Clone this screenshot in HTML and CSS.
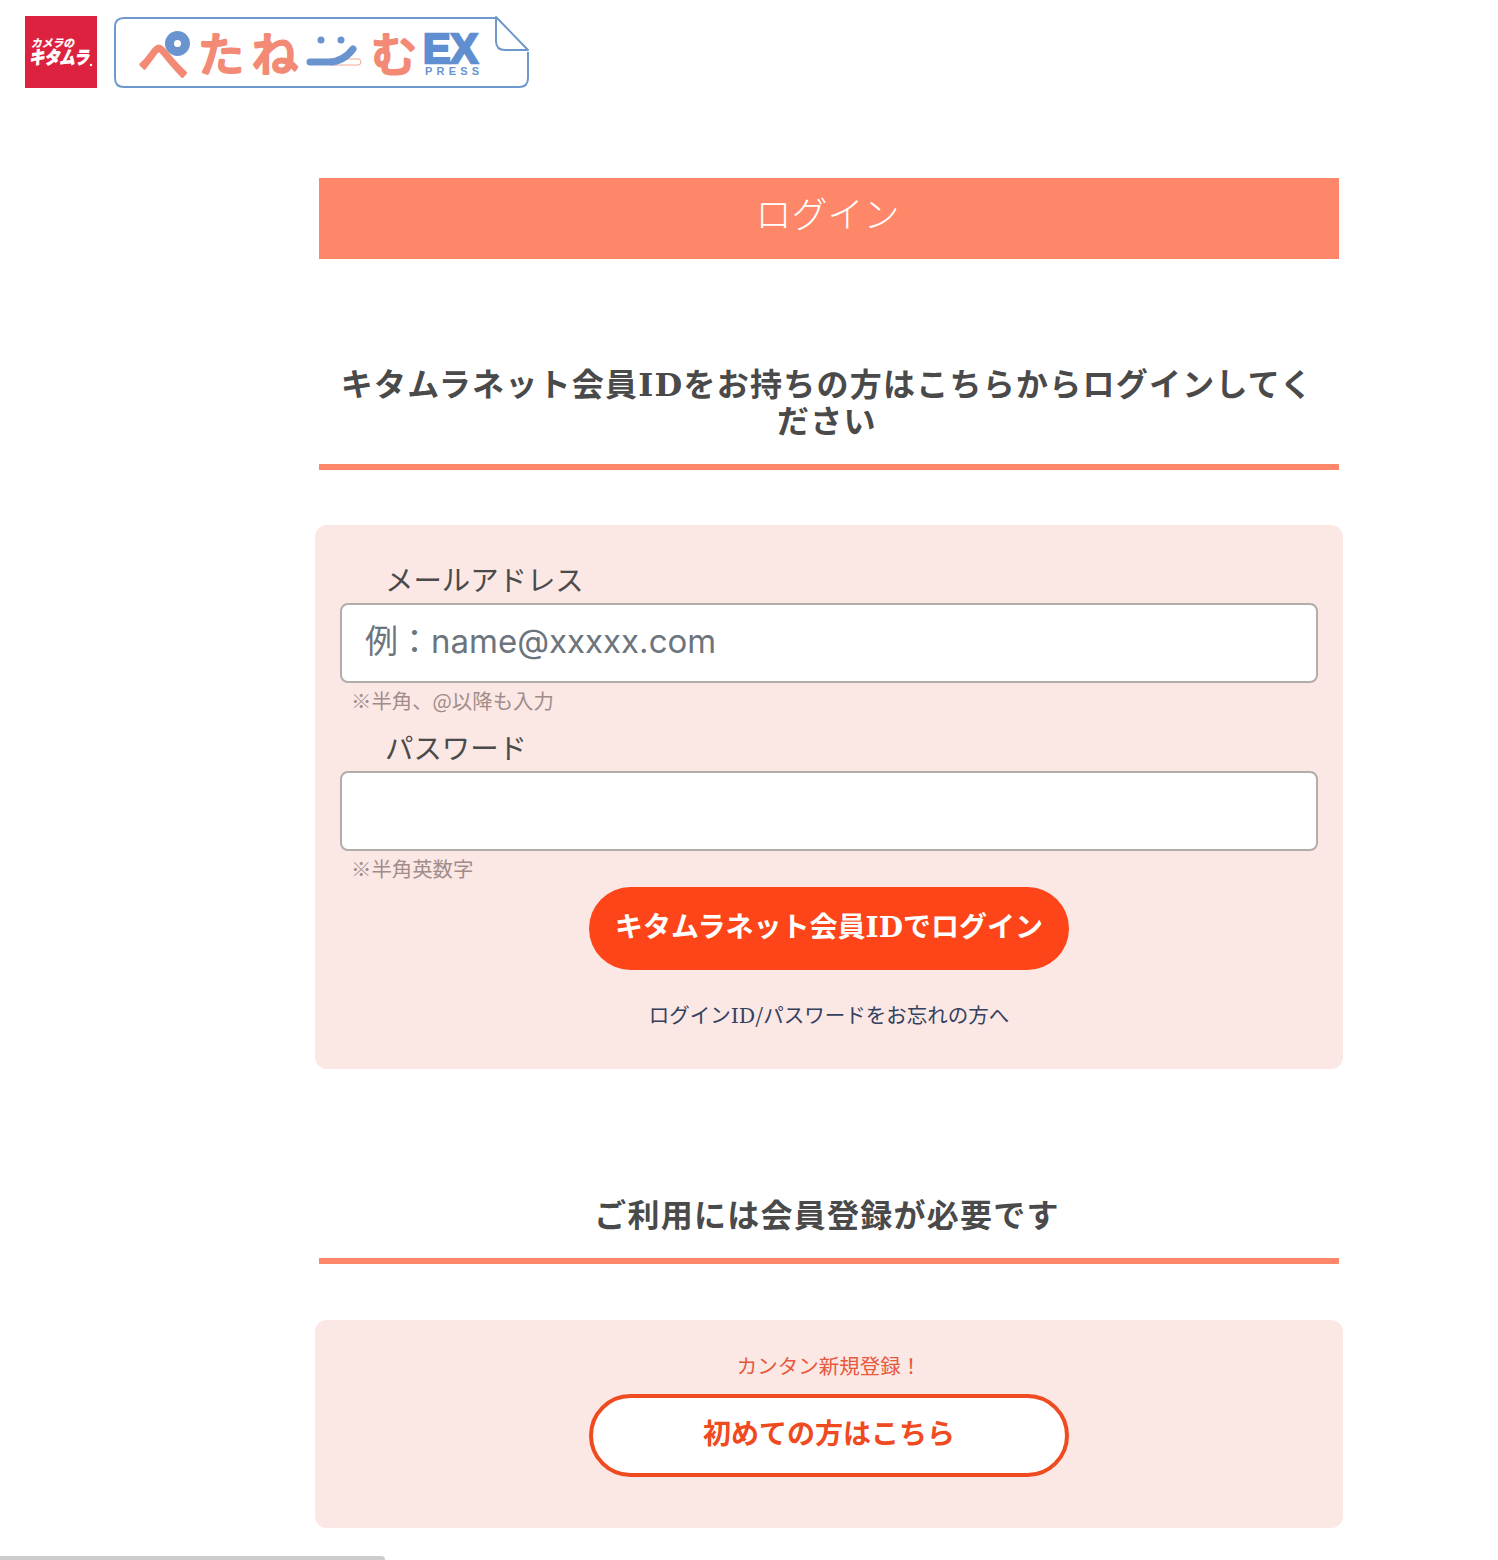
FILE: index.html
```html
<!DOCTYPE html>
<html lang="ja">
<head>
	<meta charset="UTF-8">
	<title>ログイン</title>
	<link rel="stylesheet" href="styles.css">
</head>
<body>

<header class="site-header">
	<svg class="logo-kitamura" viewBox="0 0 72 72" width="72" height="72">
		<rect width="72" height="72" fill="#dc223e"/>
		<text x="6" y="31" class="logo-kitamura-sub" textLength="43" lengthAdjust="spacingAndGlyphs">カメラの</text>
		<text x="4" y="48" class="logo-kitamura-main" textLength="60" lengthAdjust="spacingAndGlyphs">キタムラ</text>
		<circle cx="66" cy="49" r="1.2" fill="#fff"/>
	</svg>
	<svg class="logo-petanemu" viewBox="0 0 420 76" width="420" height="76">
		<path class="logo-frame" d="M382 2H11Q2 2 2 11V62Q2 71 11 71H406Q415 71 415 62V36"/>
		<path class="logo-frame" d="M383 1L415 34H392Q383 34 383 25Z"/>

		<text x="25" y="62" class="logo-kana" font-size="50">へ</text>
		<circle cx="64.500" cy="27.500" r="8" class="logo-ring"/>
		<text x="85" y="55" class="logo-kana" font-size="46">た</text>
		<text x="139" y="55" class="logo-kana" font-size="46">ね</text>

		<rect x="215" y="43" width="33" height="6" rx="3" class="logo-mouth-shadow"/>
		<circle cx="208" cy="24" r="3.500" class="logo-dot"/>
		<circle cx="228" cy="24" r="3.500" class="logo-dot"/>
		<path class="logo-mouth" d="M197 46H216Q230 46 240 33"/>

		<text x="258" y="55" class="logo-kana" font-size="46">む</text>

		<text x="310" y="47" class="logo-ex" textLength="55" lengthAdjust="spacingAndGlyphs">EX</text>
		<text x="312" y="59" class="logo-press" textLength="54">PRESS</text>
	</svg>
</header>

<main class="main-column">
	<h1 class="page-title">ログイン</h1>

	<h2 class="section-heading section-heading-login">キタムラネット会員<span class="latin">ID</span>をお持ちの方はこちらからログインしてください</h2>

	<div class="panel panel-login">
		<form>
			<label class="field-label" for="email">メールアドレス</label>
			<input class="field-input" type="text" id="email" placeholder="例：name@xxxxx.com">
			<p class="field-note">※半角、@以降も入力</p>

			<label class="field-label field-label-next" for="password">パスワード</label>
			<input class="field-input" type="password" id="password">
			<p class="field-note">※半角英数字</p>

			<button class="pill-button pill-solid" type="button">キタムラネット会員<span class="latin">ID</span>でログイン</button>
		</form>
		<a class="forgot-link" href="#">ログイン<span class="latin">ID</span>/パスワードをお忘れの方へ</a>
	</div>

	<h2 class="section-heading section-heading-register">ご利用には会員登録が必要です</h2>

	<div class="panel panel-register">
		<p class="register-lead">カンタン新規登録！</p>
		<a class="pill-button pill-outline" href="#">初めての方はこちら</a>
	</div>
</main>

<div class="scroll-thumb"></div>

</body>
</html>
```

FILE: styles.css
```css
* {
	box-sizing: border-box;
	margin: 0;
	padding: 0;
}
html, body {
	height: 100%;
	overflow: hidden;
}
body {
	background: #ffffff;
	color: #4a4a4a;
	font-family: "Noto Sans CJK JP", "Noto Sans", sans-serif;
}
.latin {
	font-family: "DejaVu Serif", "Noto Sans CJK JP", serif;
	line-height: 1;
}

/* header logos */
.site-header {
	display: flex;
	align-items: flex-start;
	gap: 16px;
	padding: 16px 0 0 25px;
	height: 88px;
}
.site-header svg {
	overflow: visible;
}
.logo-frame {
	fill: #ffffff;
	stroke: #6e97cc;
	stroke-width: 2;
	stroke-linejoin: round;
}
.logo-kitamura-sub {
	fill: #ffffff;
	stroke: #ffffff;
	stroke-width: 0.3;
	font-size: 11px;
	font-weight: 700;
	font-style: italic;
}
.logo-kitamura-main {
	fill: #ffffff;
	font-size: 18px;
	font-weight: 700;
	font-style: italic;
	stroke: #ffffff;
	stroke-width: 1;
}
.logo-kana {
	fill: #f28a75;
	stroke: #f28a75;
	stroke-width: 3;
	stroke-linejoin: round;
	stroke-linecap: round;
	font-weight: 400;
}
.logo-ring {
	fill: #ffffff;
	stroke: #6a94cf;
	stroke-width: 9;
}
.logo-dot {
	fill: #6a94cf;
}
.logo-mouth {
	fill: none;
	stroke: #6a94cf;
	stroke-width: 7;
	stroke-linecap: round;
}
.logo-mouth-shadow {
	fill: #ffffff;
	stroke: #f3a99a;
	stroke-width: 1;
}
.logo-ex {
	fill: #5f8fd0;
	font-family: "Liberation Sans", sans-serif;
	font-size: 42px;
	font-weight: 700;
	stroke: #5f8fd0;
	stroke-width: 2.5;
}
.logo-press {
	fill: #6a94cf;
	font-family: "Liberation Sans", sans-serif;
	font-size: 11px;
	font-weight: 700;
}

/* main column */
.main-column {
	width: 1028px;
	margin-left: 315px;
	padding-top: 90px;
}
.page-title {
	height: 81px;
	margin: 0 4px;
	padding: 8px 3px 0 0;
	background: #ff8769;
	color: #ffffff;
	font-size: 36px;
	font-weight: 300;
	line-height: 52px;
	text-align: center;
}
.section-heading {
	margin: 0 4px;
	padding: 0 24px 26px 20px;
	border-bottom: 6px solid #ff8769;
	color: #4a4a4a;
	font-size: 32px;
	font-weight: 700;
	letter-spacing: 1.25px;
	line-height: 37px;
	text-align: center;
}
.section-heading-login {
	margin-top: 105px;
	margin-bottom: 55px;
}
.section-heading-register {
	margin-top: 126px;
	margin-bottom: 56px;
}
.panel {
	background: #fbe7e4;
	border-radius: 12px;
	padding: 0 25px;
}
.panel-login {
	height: 544px;
	padding-top: 35px;
}
.panel-register {
	height: 208px;
	padding-top: 30px;
}

/* form */
.field-label {
	display: block;
	height: 40px;
	margin-bottom: 3px;
	padding-left: 45px;
	color: #4a4a4a;
	font-size: 28.400px;
	line-height: 38px;
}
.field-label-next {
	margin-top: 15px;
}
.field-input {
	display: block;
	width: 100%;
	height: 80px;
	padding: 0 24px 4px 23px;
	background: #ffffff;
	border: 2px solid #b2acab;
	border-radius: 8px;
	color: #4a4a4a;
	font-family: "Inter", "Noto Sans CJK JP", sans-serif;
	font-size: 33px;
}
.field-input::placeholder {
	color: #6c757d;
	opacity: 1;
}
.field-note {
	margin-top: 5px;
	padding-left: 11px;
	height: 25px;
	color: #a08d8a;
	font-size: 20.400px;
	line-height: 24px;
}
.pill-button {
	display: block;
	width: 480px;
	height: 83px;
	margin: 0 auto;
	border-radius: 42px;
	font-family: inherit;
	font-size: 28px;
	font-weight: 700;
	text-align: center;
	text-decoration: none;
}
.pill-solid {
	margin-top: 6px;
	padding-bottom: 7px;
	background: #fd4519;
	border: 0;
	color: #ffffff;
}
.pill-outline {
	margin-top: 14px;
	background: #ffffff;
	border: 4px solid #f04a20;
	color: #f04a20;
	line-height: 69px;
}
.forgot-link {
	display: block;
	margin-top: 29px;
	color: #33415f;
	font-size: 20.500px;
	line-height: 30px;
	text-align: center;
	text-decoration: none;
}
.register-lead {
	color: #e8583c;
	font-size: 20.500px;
	line-height: 30px;
	text-align: center;
}

/* horizontal scrollbar of the window */
.scroll-thumb {
	position: fixed;
	left: 0;
	bottom: 0;
	width: 385px;
	height: 4px;
	background: #cccccc;
	border-top-right-radius: 4px;
}
```
